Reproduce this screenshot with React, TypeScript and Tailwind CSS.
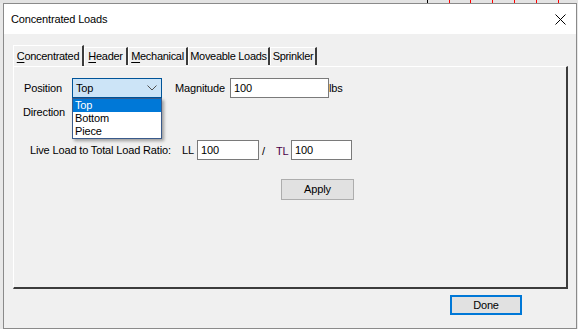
import React from 'react';

const ticks = [427, 449, 470, 492, 514, 536, 558];

function Tab({ label, ul, active, w }: { label: string; ul?: boolean; active?: boolean; w: string }) {
  const first = label[0];
  const rest = label.slice(1);
  return (
    <div
      className={`${w} whitespace-nowrap tracking-[-0.3px] ${
        active
          ? 'h-[21px] flex items-center justify-center border-l border-t border-white border-r-2 border-r-[#3c3c3c] bg-[#f0f0f0] -mb-px relative z-10'
          : 'h-[18px] flex items-center justify-center border-l border-t border-white border-r-2 border-r-[#3c3c3c] bg-[#f0f0f0] mt-[2px]'
      }`}
    >
      <span>
        {ul ? <span className="underline underline-offset-2">{first}</span> : first}
        {rest}
      </span>
    </div>
  );
}

export default function App() {
  return (
    <div className="relative w-[578px] h-[329px] bg-[#e8e8e8] overflow-hidden text-[11px] tracking-[-0.15px] whitespace-nowrap text-black" style={{ fontFamily: '"Liberation Sans", Arial, sans-serif' }}>
      {/* background app ruler */}
      <div className="h-[3px] bg-[#e3e3e3] relative">
        {ticks.map((x, i) => (
          <div key={x} className={`absolute top-0 h-[3px] w-px ${i === 0 ? 'bg-black' : 'bg-[#ff0000]'}`} style={{ left: x }} />
        ))}
      </div>

      {/* dialog window */}
      <div className="ml-[3px] w-[574px] h-[326px] border border-[#8a8a8a] bg-[#f0f0f0] flex flex-col">
        <div className="h-[30px] bg-white flex items-center justify-between pl-[7px] pr-[9px]">
          <span className="text-[11px]">Concentrated Loads</span>
          <svg width="11" height="11" viewBox="0 0 11 11" className="mr-[1px]">
            <path d="M0.5 0.5 L10.5 10.5 M10.5 0.5 L0.5 10.5" stroke="#000" strokeWidth="1" />
          </svg>
        </div>

        <div className="pl-[9px] pt-[11px]">
          {/* tab strip */}
          <div className="flex items-start h-[21px]">
            <Tab w="w-[71px]" label="Concentrated" ul active />
            <Tab w="w-[44px]" label="Header" ul />
            <Tab w="w-[60px]" label="Mechanical" ul />
            <Tab w="w-[82px]" label="Moveable Loads" />
            <Tab w="w-[47px]" label="Sprinkler" />
          </div>

          {/* tab panel */}
          <div className="w-[555px] h-[223px] border-l border-t border-white border-r-2 border-b-2 border-r-[#3c3c3c] border-b-[#3c3c3c] pl-[10px] pt-[11px]">
            <div className="flex items-center h-[20px]">
              <span className="w-[48px]">Position</span>
              <div className="relative">
                <div className="w-[90px] h-[20px] bg-[#cce4f7] border border-[#005499] flex items-center justify-between pl-[3px] pr-[4px]">
                  <span>Top</span>
                  <svg width="10" height="6" viewBox="0 0 10 6">
                    <path d="M0.5 0.5 L5 5 L9.5 0.5" fill="none" stroke="#505050" strokeWidth="1" />
                  </svg>
                </div>
                <div className="absolute left-0 top-[20px] w-[90px] bg-white border border-[#3a5a8a] shadow-[2px_2px_3px_rgba(0,0,0,0.35)] z-20 leading-[13px]">
                  <div className="bg-[#0078d7] text-white pl-[2px] h-[13px]">Top</div>
                  <div className="pl-[2px] h-[13px]">Bottom</div>
                  <div className="pl-[2px] h-[13px]">Piece</div>
                </div>
              </div>
              <span className="ml-[13px] w-[55px]">Magnitude</span>
              <div className="w-[99px] h-[20px] bg-white border border-[#7a7a7a] flex items-center pl-[3px]">100</div>
              <span>lbs</span>
            </div>

            <div className="h-[28px] flex items-center">
              <span className="-ml-px">Direction</span>
            </div>

            <div className="flex items-center h-[20px] mt-[14px] pl-[6px]">
              <span className="w-[152px]">Live Load to Total Load Ratio:</span>
              <span className="w-[15px]">LL</span>
              <div className="w-[62px] h-[20px] bg-white border border-[#7a7a7a] flex items-center pl-[3px]">100</div>
              <span className="ml-[3px] w-[14px] mt-[3px]">/</span>
              <span className="w-[15px] text-[#4b0048] mt-[3px]">TL</span>
              <div className="w-[61px] h-[20px] bg-white border border-[#7a7a7a] flex items-center pl-[3px]">100</div>
            </div>

            <div className="flex mt-[19px] pl-[257px]">
              <div className="w-[73px] h-[21px] bg-[#e1e1e1] border border-[#adadad] flex items-center justify-center">Apply</div>
            </div>
          </div>

          <div className="flex pl-[437px] mt-[6px]">
            <div className="w-[72px] h-[20px] bg-[#e1e1e1] border-2 border-[#0078d7] flex items-center justify-center">Done</div>
          </div>
        </div>
      </div>
    </div>
  );
}
